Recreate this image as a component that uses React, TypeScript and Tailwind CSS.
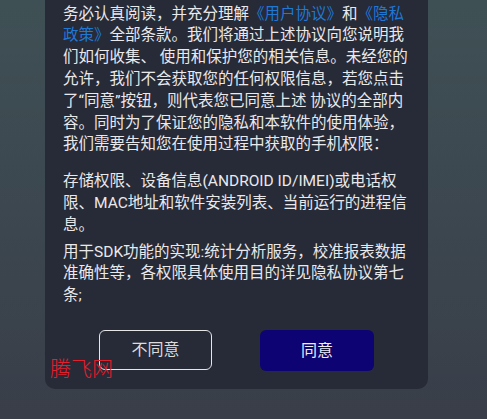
import React from "react";

const Link = ({ children }: { children: React.ReactNode }) => (
  <span className="text-[#1f78d4]">{children}</span>
);

export default function App() {
  const font = { fontFamily: 'Roboto, "Noto Sans CJK SC", sans-serif' };
  return (
    <div
      className="relative w-[487px] h-[419px] overflow-hidden bg-gradient-to-b from-[#3f5055] to-[#393e49] flex flex-col justify-end items-start pb-[30px]"
      style={font}
    >
      <div className="ml-[45px] w-[383px] shrink-0 rounded-[10px] bg-[#272a37] pl-[18px] pr-[10px] pb-[18px] text-[15.5px] leading-[21.8px] text-[#e9e9ec] whitespace-nowrap">
        <p>
          欢迎使用本软件！在您使用本软件各项服务前，请您
          <br />
          务必认真阅读，并充分理解<Link>《用户协议》</Link>和<Link>《隐私</Link>
          <br />
          <Link>政策》</Link>全部条款。我们将通过上述协议向您说明我
          <br />
          们如何收集、 使用和保护您的相关信息。未经您的
          <br />
          允许，我们不会获取您的任何权限信息，若您点击
          <br />
          了“同意”按钮，则代表您已同意上述 协议的全部内
          <br />
          容。同时为了保证您的隐私和本软件的使用体验，
          <br />
          我们需要告知您在使用过程中获取的手机权限：
        </p>
        <p className="mt-[15px]">
          存储权限、设备信息(ANDROID ID/IMEI)或电话权
          <br />
          限、MAC地址和软件安装列表、当前运行的进程信
          <br />
          息。
        </p>
        <p className="mt-[5px]">
          用于SDK功能的实现:统计分析服务，校准报表数据
          <br />
          准确性等，各权限具体使用目的详见隐私协议第七
          <br />
          条;
        </p>
        <div className="mt-[23px] -ml-[8px] flex justify-center gap-[48px]">
          <button className="w-[113px] h-[40px] rounded-[6px] border-[1.5px] border-[#e6e6e6] text-[16px] text-[#dcdcdc]">
            不同意
          </button>
          <button className="w-[114px] h-[41px] rounded-[6px] bg-[#0e0372] text-[16px] text-[#ececf4]">
            同意
          </button>
        </div>
      </div>
      <div
        className="absolute left-[50px] top-[355px] text-[21px] leading-[24px] text-[#e3202b]"
        style={{ fontFamily: '"Noto Sans CJK SC", sans-serif', fontWeight: 300 }}
      >
        腾飞网
      </div>
    </div>
  );
}
